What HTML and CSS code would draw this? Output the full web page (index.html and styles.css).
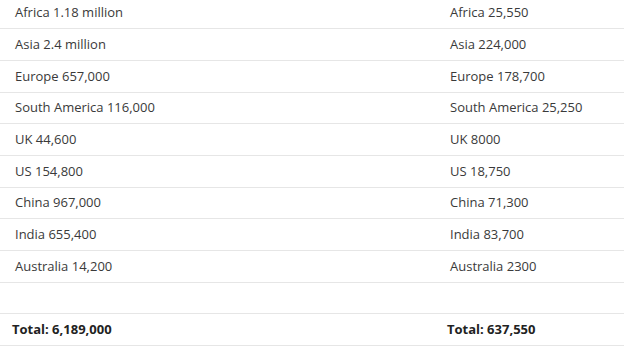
FILE: index.html
```html
<!DOCTYPE html>
<html>
<head>
<meta charset="utf-8">
<link rel="stylesheet" href="styles.css">
</head>
<body>
<table class="stats">
  <colgroup><col class="c1"><col class="c2"></colgroup>
  <tbody>
    <tr><td>Africa 1.18 million</td><td>Africa 25,550</td></tr>
    <tr><td>Asia 2.4 million</td><td>Asia 224,000</td></tr>
    <tr><td>Europe 657,000</td><td>Europe 178,700</td></tr>
    <tr><td>South America 116,000</td><td>South America 25,250</td></tr>
    <tr><td>UK 44,600</td><td>UK 8000</td></tr>
    <tr><td>US 154,800</td><td>US 18,750</td></tr>
    <tr><td>China 967,000</td><td>China 71,300</td></tr>
    <tr><td>India 655,400</td><td>India 83,700</td></tr>
    <tr><td>Australia 14,200</td><td>Australia 2300</td></tr>
    <tr class="empty"><td></td><td></td></tr>
    <tr class="total"><th>Total: 6,189,000</th><th>Total: 637,550</th></tr>
  </tbody>
</table>
</body>
</html>
```
FILE: styles.css
```css
html, body {
  margin: 0;
  padding: 0;
  background: #fff;
}
body {
  overflow: hidden;
}
.stats {
  width: 100%;
  border-collapse: collapse;
  margin-top: -3px;
  font-family: "Open Sans", "Liberation Sans", sans-serif;
  font-size: 13px;
  color: #3a3a3a;
}
.c1 { width: 435px; }
.stats td, .stats th {
  height: 31.7px;
  box-sizing: border-box;
  padding: 0 15px 1px;
  border-bottom: 1px solid #e6e6e6;
  text-align: left;
  vertical-align: middle;
  font-weight: 400;
}
.stats .total th {
  padding-left: 12px;
  font-weight: 700;
  color: #222;
}
```
